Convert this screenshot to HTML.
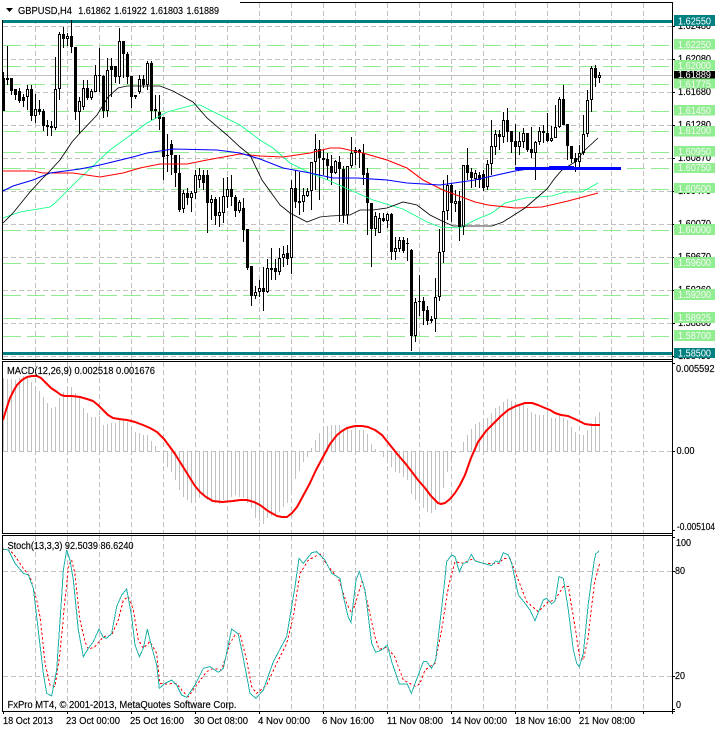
<!DOCTYPE html>
<html><head><meta charset="utf-8"><title>GBPUSD,H4</title>
<style>
html,body{margin:0;padding:0;background:#fff;width:715px;height:729px;overflow:hidden}
svg{display:block;position:absolute;left:0;top:0}
text{font-family:"Liberation Sans",sans-serif;font-size:9.8px;fill:#000;stroke:#000;stroke-width:.15}
.w{fill:#f8f8f8;stroke:none}
.t{fill:#fff;stroke:none}
</style></head><body>
<svg width="715" height="729" viewBox="0 0 715 729" xmlns="http://www.w3.org/2000/svg">
<rect width="715" height="729" fill="#fff"/>
<!-- vertical grid -->
<g stroke="#c0c0c0" stroke-dasharray="5 3" shape-rendering="crispEdges" fill="none">
<path d="M35.5 3V359M67.5 3V359M99.5 3V359M131.5 3V359M163.5 3V359M195.5 3V359M227.5 3V359M259.5 3V359M291.5 3V359M323.5 3V359M355.5 3V359M387.5 3V359M419.5 3V359M451.5 3V359M483.5 3V359M515.5 3V359M547.5 3V359M579.5 3V359M611.5 3V359M643.5 3V359"/>
<path d="M35.5 362V533M67.5 362V533M99.5 362V533M131.5 362V533M163.5 362V533M195.5 362V533M227.5 362V533M259.5 362V533M291.5 362V533M323.5 362V533M355.5 362V533M387.5 362V533M419.5 362V533M451.5 362V533M483.5 362V533M515.5 362V533M547.5 362V533M579.5 362V533M611.5 362V533M643.5 362V533"/>
<path d="M35.5 536V711M67.5 536V711M99.5 536V711M131.5 536V711M163.5 536V711M195.5 536V711M227.5 536V711M259.5 536V711M291.5 536V711M323.5 536V711M355.5 536V711M387.5 536V711M419.5 536V711M451.5 536V711M483.5 536V711M515.5 536V711M547.5 536V711M579.5 536V711M611.5 536V711M643.5 536V711"/>
<path d="M3 26.5H672M3 59.5H672M3 92.5H672M3 125.5H672M3 158.5H672M3 191.5H672M3 224.5H672M3 257.5H672M3 290.5H672M3 323.5H672M3 356.5H672"/>
<path d="M3 451.5H672M3 571.5H672M3 676.5H672"/>
</g>
<!-- title background -->
<rect x="0" y="0" width="240" height="20" fill="#fff"/>
<!-- green levels -->
<path d="M3 45.5H672M3 66.5H672M3 84.5H672M3 111.5H672M3 131.5H672M3 152.5H672M3 168.5H672M3 189.5H672M3 230.5H672M3 263.5H672M3 295.5H672M3 318.5H672M3 336.5H672" stroke="#90ee90" stroke-dasharray="18 6" fill="none" shape-rendering="crispEdges"/>
<path d="M3 75.5H672" stroke="#c0c0c0" fill="none" shape-rendering="crispEdges"/>
<rect x="3" y="20" width="669" height="3" fill="#008080"/>
<rect x="3" y="352" width="669" height="3" fill="#008080"/>
<!-- wicks -->
<path shape-rendering="crispEdges" fill="none" stroke="#000" d="M3.5 72V111M7.5 46V85M11.5 78V95M15.5 89V100M19.5 88V103M23.5 94V107M27.5 85V110M31.5 85V121M35.5 94V123M39.5 100V115M43.5 109V131M47.5 120V136M51.5 121V136M55.5 57V130M59.5 32V100M63.5 27V48M67.5 33V46M71.5 20V53M75.5 47V120M79.5 97V134M83.5 80V110M87.5 80V100M91.5 89V100M95.5 65V92M99.5 48V92M103.5 75V118M107.5 58V117M111.5 58V97M115.5 66V83M119.5 28V84M123.5 41V78M127.5 52V84M131.5 76V108M135.5 95V99M139.5 75V94M143.5 75V88M147.5 61V90M151.5 61V120M155.5 95V119M159.5 95V130M163.5 117V180M167.5 134V172M171.5 140V175M175.5 155V187M179.5 155V212M183.5 190V213M187.5 188V205M191.5 191V212M195.5 170V199M199.5 168V188M203.5 170V190M207.5 170V233M211.5 195V220M215.5 197V225M219.5 197V227M223.5 178V223M227.5 177V208M231.5 175V206M235.5 195V217M239.5 200V213M243.5 198V242M247.5 229V270M251.5 266V306M255.5 286V299M259.5 280V297M263.5 267V311M267.5 259V293M271.5 248V280M275.5 259V280M279.5 248V275M283.5 246V267M287.5 245V265M291.5 180V274M295.5 170V208M299.5 172V215M303.5 188V212M307.5 188V197M311.5 162V210M315.5 134V190M319.5 140V200M323.5 149V175M327.5 153V180M331.5 155V185M335.5 160V174M339.5 156V222M343.5 166V223M347.5 166V224M351.5 137V168M355.5 147V165M359.5 149V168M363.5 144V185M367.5 168V235M371.5 203V267M375.5 212V236M379.5 213V233M383.5 213V222M387.5 213V228M391.5 213V260M395.5 237V260M399.5 237V252M403.5 237V253M407.5 238V261M411.5 249V351M415.5 298V342M419.5 275V316M423.5 297V325M427.5 306V325M431.5 316V323M435.5 278V332M439.5 229V301M443.5 180V263M447.5 175V220M451.5 183V222M455.5 190V212M459.5 191V241M463.5 165V235M467.5 148V180M471.5 168V188M475.5 170V187M479.5 172V188M483.5 170V191M487.5 160V190M491.5 120V175M495.5 130V155M499.5 130V150M503.5 112V143M507.5 108V142M511.5 131V153M515.5 124V165M519.5 132V155M523.5 128V148M527.5 133V152M531.5 127V158M535.5 141V180M539.5 127V145M543.5 125V143M547.5 113V142M551.5 126V142M555.5 105V138M559.5 97V128M563.5 85V125M567.5 124V160M571.5 146V163M575.5 153V172M579.5 145V170M583.5 115V155M587.5 90V137M591.5 66V112M595.5 65V87M599.5 72V83"/>
<!-- white bodies -->
<path shape-rendering="crispEdges" fill="#fff" stroke="#000" d="M3.5 78.5h1v32h-1zM26.5 89.5h2v7h-2zM34.5 109.5h2v6h-2zM54.5 89.5h2v38h-2zM58.5 34.5h2v54h-2zM66.5 36.5h2v2h-2zM78.5 101.5h2v10h-2zM82.5 88.5h2v18h-2zM90.5 91.5h2v6h-2zM94.5 75.5h2v16h-2zM106.5 70.5h2v40h-2zM118.5 41.5h2v35h-2zM138.5 79.5h2v12h-2zM146.5 63.5h2v21h-2zM182.5 193.5h2v15h-2zM190.5 193.5h2v4h-2zM194.5 175.5h2v17h-2zM198.5 175.5h2v4h-2zM210.5 199.5h2v3h-2zM218.5 212.5h2v3h-2zM222.5 196.5h2v16h-2zM226.5 189.5h2v7h-2zM238.5 202.5h2v8h-2zM254.5 292.5h2v3h-2zM258.5 288.5h2v3h-2zM266.5 268.5h2v23h-2zM278.5 258.5h2v13h-2zM282.5 254.5h2v3h-2zM290.5 188.5h2v69h-2zM302.5 195.5h2v6h-2zM306.5 191.5h2v4h-2zM310.5 162.5h2v28h-2zM314.5 149.5h2v12h-2zM334.5 161.5h2v11h-2zM346.5 166.5h2v48h-2zM350.5 153.5h2v12h-2zM354.5 150.5h2v2h-2zM374.5 216.5h2v12h-2zM378.5 218.5h2v14h-2zM386.5 214.5h2v6h-2zM394.5 248.5h2v3h-2zM398.5 240.5h2v8h-2zM414.5 302.5h2v33h-2zM434.5 297.5h2v21h-2zM438.5 252.5h2v44h-2zM442.5 211.5h2v40h-2zM446.5 185.5h2v25h-2zM454.5 201.5h2v2h-2zM462.5 165.5h2v61h-2zM474.5 173.5h2v5h-2zM486.5 164.5h2v22h-2zM490.5 146.5h2v17h-2zM494.5 134.5h2v12h-2zM502.5 120.5h2v16h-2zM518.5 141.5h2v5h-2zM522.5 133.5h2v8h-2zM534.5 142.5h2v10h-2zM538.5 131.5h2v10h-2zM550.5 138.5h2v2h-2zM554.5 127.5h2v10h-2zM558.5 99.5h2v27h-2zM578.5 153.5h2v8h-2zM582.5 134.5h2v18h-2zM586.5 100.5h2v33h-2zM590.5 68.5h2v31h-2zM598.5 75.5h2v2h-2z"/>
<!-- black bodies -->
<path shape-rendering="crispEdges" fill="#000" d="M6 78h3v2h-3zM10 78h3v13h-3zM14 89h3v6h-3zM18 91h3v10h-3zM22 97h3v4h-3zM30 89h3v27h-3zM38 109h3v3h-3zM42 111h3v15h-3zM46 125h3v2h-3zM50 126h3v2h-3zM62 34h3v5h-3zM70 36h3v11h-3zM74 47h3v65h-3zM86 88h3v10h-3zM98 75h3v1h-3zM102 76h3v35h-3zM110 66h3v4h-3zM114 66h3v11h-3zM122 41h3v13h-3zM126 54h3v23h-3zM130 76h3v21h-3zM134 95h3v2h-3zM142 79h3v6h-3zM150 63h3v48h-3zM154 109h3v2h-3zM158 112h3v7h-3zM162 117h3v40h-3zM166 155h3v1h-3zM170 144h3v11h-3zM174 155h3v18h-3zM178 173h3v37h-3zM186 193h3v5h-3zM202 175h3v8h-3zM206 175h3v28h-3zM214 199h3v17h-3zM230 189h3v8h-3zM234 197h3v14h-3zM242 208h3v22h-3zM246 229h3v39h-3zM250 266h3v30h-3zM262 288h3v4h-3zM270 268h3v2h-3zM274 268h3v4h-3zM286 253h3v6h-3zM294 188h3v14h-3zM298 201h3v2h-3zM318 149h3v9h-3zM322 158h3v2h-3zM326 159h3v7h-3zM330 166h3v7h-3zM338 162h3v7h-3zM342 169h3v46h-3zM358 150h3v3h-3zM362 153h3v22h-3zM366 173h3v30h-3zM370 203h3v26h-3zM382 218h3v3h-3zM390 214h3v38h-3zM402 240h3v11h-3zM406 243h3v1h-3zM410 250h3v86h-3zM418 301h3v1h-3zM422 301h3v10h-3zM426 310h3v11h-3zM430 319h3v2h-3zM450 185h3v18h-3zM458 201h3v26h-3zM466 165h3v8h-3zM470 172h3v6h-3zM478 175h3v5h-3zM482 174h3v14h-3zM498 134h3v3h-3zM506 120h3v12h-3zM510 131h3v11h-3zM514 141h3v6h-3zM526 133h3v17h-3zM530 149h3v4h-3zM542 131h3v2h-3zM546 133h3v8h-3zM562 99h3v26h-3zM566 124h3v22h-3zM570 146h3v13h-3zM574 158h3v4h-3zM594 68h3v10h-3z"/>
<!-- moving averages -->
<g fill="none" stroke-width=".85">
<polyline stroke="#00ff7f" points="3,218 20,212 50,207 55,203 78,180 110,150 147,123 167,112 193,105 200,105 240,125 260,140 273,148 290,163 310,173 328,180 350,190 373,200 403,209 427,222 440,227 460,228 475,220 492,213 505,203 525,198 552,196 565,192 582,192 598,183"/>
<polyline stroke="#ff0000" stroke-width="1.1" points="3,171 33,171 43,173 73,173 100,177 123,173 140,168 160,164 187,164 207,160 240,154 260,156 283,157 310,153 330,148 340,148 363,153 387,160 407,168 423,180 443,190 475,202 488,205 515,208 542,207 568,201 598,193"/>
<polyline stroke="#0000ff" stroke-width="1.1" points="3,191 13,186 33,180 50,173 80,169 100,165 133,157 147,153 173,149 217,150 240,153 260,159 283,168 310,173 333,178 357,178 387,180 407,183 440,185 475,180 488,177 515,171 535,168"/>
<polyline stroke="#000" points="3,223 13,213 30,192 41,180 48,173 60,160 72,142 80,133 97,115 102,107 108,97 118,88 127,86 160,86 173,91 193,102 207,118 227,135 240,147 250,155 262,180 280,205 290,213 307,222 320,217 330,216 350,215 360,210 373,210 387,208 403,202 417,205 430,215 440,220 453,226 492,226 503,222 525,208 547,189 555,178 562,170 575,162 585,150 598,138"/>
</g>
<rect x="515" y="167" width="106" height="3" fill="#0000ff"/>
<rect x="549" y="166" width="25" height="1" fill="#0000ff"/>
<!-- MACD histogram -->
<path shape-rendering="crispEdges" fill="none" stroke="#c0c0c0" d="M3.5 451V378M7.5 451V379M11.5 451V379M15.5 451V380M19.5 451V378M23.5 451V376M27.5 451V377M31.5 451V382M35.5 451V386M39.5 451V391M43.5 451V397M47.5 451V403M51.5 451V408M55.5 451V407M59.5 451V398M63.5 451V392M67.5 451V387M71.5 451V387M75.5 451V393M79.5 451V398M83.5 451V408M87.5 451V413M91.5 451V417M95.5 451V417M99.5 451V416M103.5 451V425M107.5 451V424M111.5 451V423M115.5 451V423M119.5 451V420M123.5 451V420M127.5 451V422M131.5 451V428M135.5 451V432M139.5 451V433M143.5 451V435M147.5 451V435M151.5 451V441M155.5 451V446M163.5 451V458M167.5 451V467M171.5 451V472M175.5 451V480M179.5 451V490M183.5 451V497M187.5 451V500M191.5 451V503M195.5 451V502M199.5 451V498M203.5 451V495M207.5 451V500M211.5 451V502M215.5 451V503M219.5 451V504M223.5 451V500M227.5 451V498M231.5 451V497M235.5 451V495M239.5 451V497M243.5 451V498M247.5 451V503M251.5 451V508M255.5 451V518M259.5 451V521M263.5 451V524M267.5 451V518M271.5 451V516M275.5 451V515M279.5 451V512M283.5 451V507M287.5 451V503M291.5 451V491M295.5 451V479M299.5 451V471M303.5 451V462M307.5 451V457M311.5 451V448M315.5 451V440M319.5 451V433M323.5 451V430M327.5 451V426M331.5 451V425M335.5 451V425M339.5 451V425M343.5 451V430M347.5 451V428M351.5 451V430M355.5 451V430M359.5 451V430M363.5 451V430M367.5 451V434M371.5 451V444M375.5 451V449M383.5 451V457M387.5 451V460M391.5 451V467M395.5 451V472M399.5 451V473M403.5 451V477M407.5 451V480M411.5 451V494M415.5 451V500M419.5 451V503M423.5 451V508M427.5 451V512M431.5 451V513M435.5 451V510M439.5 451V502M443.5 451V488M447.5 451V472M451.5 451V462M455.5 451V453M463.5 451V442M467.5 451V435M471.5 451V429M475.5 451V424M479.5 451V422M483.5 451V420M487.5 451V418M491.5 451V413M495.5 451V408M499.5 451V406M503.5 451V402M507.5 451V399M511.5 451V401M515.5 451V403M519.5 451V405M523.5 451V405M527.5 451V408M531.5 451V412M535.5 451V414M539.5 451V415M543.5 451V415M547.5 451V415M551.5 451V418M555.5 451V418M559.5 451V416M563.5 451V418M567.5 451V420M571.5 451V427M575.5 451V432M579.5 451V435M583.5 451V435M587.5 451V430M591.5 451V423M595.5 451V417M599.5 451V412"/>
<polyline fill="none" stroke="#ff0000" stroke-width="2" stroke-linejoin="round" points="3,420 6,410 10,398 14,390 17,385 22,380 27,377 32,376 37,376 41,378 45,382 51,388 57,392 61,395 65,396 72,396 80,397 87,399 93,401 98,405 103,410 108,415 113,418 119,419 127,420 135,422 143,425 150,428 157,432 164,439 170,447 175,454 180,462 185,470 190,478 195,486 200,492 206,497 213,501 222,502 233,501 240,500 247,500 254,502 260,505 268,511 277,516 282,517 287,517 292,513 297,507 303,496 310,483 316,470 323,457 330,444 337,435 342,431 347,428 351,427 355,426 362,426 368,427 375,430 382,435 390,445 398,455 405,463 412,472 418,480 425,488 431,496 438,503 441,504 445,503 450,499 455,493 460,485 465,475 471,458 478,442 486,431 495,422 501,416 508,410 516,406 525,403 532,403 538,405 545,408 550,410 555,413 561,415 568,416 577,420 585,424 592,425 600,425"/>
<!-- Stochastic -->
<g fill="none" stroke="#ff0000" stroke-dasharray="7 7" stroke-width="3" shape-rendering="crispEdges">
<polyline transform="translate(0,530) scale(.33333)" points="8,58 30,60 50,85 70,115 90,140 110,210 120,260 135,400 150,465 165,470 180,370 195,210 205,110 215,90 225,130 240,270 255,335 265,358 285,350 310,320 335,315 355,270 370,210 385,200 400,240 415,330 430,355 450,335 470,370 480,460 500,462 530,460 545,480 565,500 590,465 620,425 640,415 665,420 690,340 705,315 720,310 740,390 755,470 770,490 800,465 830,400 860,340 880,260 900,130 925,90 960,72 985,110 1015,145 1040,220 1055,250 1065,225"/>
<polyline transform="translate(355,530) scale(.33333)" points="0,225 22,150 40,230 60,320 72,358 95,352 118,378 145,450 182,470 195,460 210,420 240,400 260,300 280,170 300,95 325,100 349,88 385,100 410,100 433,100 445,85 465,85 490,150 515,215 550,245 580,215 600,210 625,170 640,170 660,290 673,375 685,390 700,320 718,160 735,97"/>
</g>
<g fill="none" stroke="#20b2aa" stroke-width="3" shape-rendering="crispEdges">
<polyline transform="translate(0,530) scale(.33333)" points="8,57 25,60 45,100 70,130 85,135 100,175 110,260 130,430 140,490 155,498 170,420 185,200 190,120 200,60 210,90 220,150 235,300 250,380 265,355 280,335 297,297 310,322 320,325 335,310 350,230 365,195 380,177 395,260 405,345 418,380 430,355 442,297 455,350 470,405 478,475 495,460 515,450 530,465 545,495 560,502 585,465 610,415 630,410 655,427 670,415 695,297 715,312 730,385 750,490 768,505 790,480 820,395 860,320 885,170 897,85 910,100 935,68 950,65 975,90 995,130 1020,145 1030,200 1045,262 1053,277 1068,150"/>
<polyline transform="translate(355,530) scale(.33333)" points="3,150 13,125 30,180 50,340 62,367 80,360 97,345 110,395 133,462 157,462 169,490 205,395 215,395 230,415 242,390 265,190 275,95 290,75 300,80 313,125 325,100 337,97 349,73 360,93 385,100 410,107 422,93 433,97 445,68 460,75 470,100 490,195 510,220 525,240 540,272 565,210 575,205 590,222 600,213 612,140 625,145 640,240 655,360 665,400 673,410 685,370 700,220 718,90 722,72 732,63"/>
</g>
<!-- frame -->
<g fill="none" stroke="#000" shape-rendering="crispEdges">
<path d="M240 2.5H672.5V714M2.5 20V359.5H672M2.5 361.5H672M2.5 361V533.5H672M2.5 535.5H672M2.5 535V711.5H675"/>
<path d="M672 26.5h3M672 59.5h3M672 92.5h3M672 125.5h3M672 158.5h3M672 191.5h3M672 224.5h3M672 257.5h3M672 290.5h3M672 323.5h3M672 356.5h3M672 363.5h3M672 451.5h3M672 530.5h3M672 537.5h3M672 571.5h3M672 676.5h3M672 709.5h3"/>
<path d="M3.5 711V714M67.5 711V714M131.5 711V714M195.5 711V714M259.5 711V714M323.5 711V714M387.5 711V714M451.5 711V714M515.5 711V714M579.5 711V714M643.5 711V714"/>
</g>
<!-- title -->
<path d="M6 8h7l-3.5 4z" fill="#000"/>
<text x="18" y="14" textLength="54" lengthAdjust="spacingAndGlyphs">GBPUSD,H4</text>
<text x="78.3" y="14" textLength="32.5" lengthAdjust="spacingAndGlyphs">1.61862</text>
<text x="114.3" y="14" textLength="32.5" lengthAdjust="spacingAndGlyphs">1.61922</text>
<text x="150.5" y="14" textLength="32.5" lengthAdjust="spacingAndGlyphs">1.61803</text>
<text x="186.5" y="14" textLength="32.5" lengthAdjust="spacingAndGlyphs">1.61889</text>
<text x="7" y="374" textLength="148" lengthAdjust="spacingAndGlyphs">MACD(12,26,9) 0.002518 0.001676</text>
<text x="7.5" y="549" textLength="126" lengthAdjust="spacingAndGlyphs">Stoch(13,3,3) 92.5039 86.6240</text>
<text x="7.5" y="708" textLength="229" lengthAdjust="spacingAndGlyphs">FxPro MT4, © 2001-2013, MetaQuotes Software Corp.</text>
<!-- price ticks -->
<g>
<text x="678" y="29" textLength="33" lengthAdjust="spacingAndGlyphs">1.62480</text>
<text x="678" y="62" textLength="33" lengthAdjust="spacingAndGlyphs">1.62080</text>
<text x="678" y="95" textLength="33" lengthAdjust="spacingAndGlyphs">1.61680</text>
<text x="678" y="128" textLength="33" lengthAdjust="spacingAndGlyphs">1.61280</text>
<text x="678" y="161" textLength="33" lengthAdjust="spacingAndGlyphs">1.60870</text>
<text x="678" y="194" textLength="33" lengthAdjust="spacingAndGlyphs">1.60470</text>
<text x="678" y="227" textLength="33" lengthAdjust="spacingAndGlyphs">1.60070</text>
<text x="678" y="260" textLength="33" lengthAdjust="spacingAndGlyphs">1.59670</text>
<text x="678" y="293" textLength="33" lengthAdjust="spacingAndGlyphs">1.59260</text>
<text x="678" y="326" textLength="33" lengthAdjust="spacingAndGlyphs">1.58860</text>
<text x="678" y="359" textLength="33" lengthAdjust="spacingAndGlyphs">1.58450</text>
</g>
<!-- price labels -->
<g fill="#90ee90">
<rect x="674" y="39" width="41" height="10.5"/><rect x="674" y="60" width="41" height="10.5"/><rect x="674" y="78" width="41" height="10.5"/><rect x="674" y="105" width="41" height="10.5"/><rect x="674" y="126" width="41" height="10.5"/><rect x="674" y="146" width="41" height="10.5"/><rect x="674" y="163" width="41" height="10"/><rect x="674" y="183" width="41" height="10"/><rect x="674" y="224" width="41" height="11"/><rect x="674" y="257" width="41" height="11"/><rect x="674" y="289" width="41" height="11"/><rect x="674" y="312" width="41" height="11"/><rect x="674" y="330" width="41" height="11"/>
</g>
<rect x="674" y="15" width="41" height="11" fill="#008080"/>
<rect x="674" y="348" width="41" height="10" fill="#008080"/>
<rect x="674" y="71" width="41" height="7.5" fill="#000"/>
<text class="t" x="678" y="24.5" textLength="33" lengthAdjust="spacingAndGlyphs">1.62550</text>
<text class="w" x="678" y="48" textLength="33" lengthAdjust="spacingAndGlyphs">1.62250</text>
<text class="w" x="678" y="69" textLength="33" lengthAdjust="spacingAndGlyphs">1.62000</text>
<text class="t" x="678" y="78" textLength="33" lengthAdjust="spacingAndGlyphs">1.61889</text>
<text class="w" x="678" y="87.5" textLength="33" lengthAdjust="spacingAndGlyphs">1.61775</text>
<text class="w" x="678" y="114" textLength="33" lengthAdjust="spacingAndGlyphs">1.61450</text>
<text class="w" x="678" y="134" textLength="33" lengthAdjust="spacingAndGlyphs">1.61200</text>
<text class="w" x="678" y="155" textLength="33" lengthAdjust="spacingAndGlyphs">1.60950</text>
<text class="w" x="678" y="171" textLength="33" lengthAdjust="spacingAndGlyphs">1.60750</text>
<text class="w" x="678" y="192" textLength="33" lengthAdjust="spacingAndGlyphs">1.60500</text>
<text class="w" x="678" y="233" textLength="33" lengthAdjust="spacingAndGlyphs">1.60000</text>
<text class="w" x="678" y="266" textLength="33" lengthAdjust="spacingAndGlyphs">1.59600</text>
<text class="w" x="678" y="298" textLength="33" lengthAdjust="spacingAndGlyphs">1.59200</text>
<text class="w" x="678" y="321" textLength="33" lengthAdjust="spacingAndGlyphs">1.58925</text>
<text class="w" x="678" y="339" textLength="33" lengthAdjust="spacingAndGlyphs">1.58700</text>
<text class="t" x="678" y="356.5" textLength="33" lengthAdjust="spacingAndGlyphs">1.58500</text>
<!-- indicator scales -->
<text x="676" y="372" textLength="38.5" lengthAdjust="spacingAndGlyphs">0.005592</text>
<text x="676.5" y="454" textLength="18" lengthAdjust="spacingAndGlyphs">0.00</text>
<text x="677" y="530" textLength="38" lengthAdjust="spacingAndGlyphs">-0.005104</text>
<text x="676" y="546" textLength="15" lengthAdjust="spacingAndGlyphs">100</text>
<text x="675" y="574" textLength="10" lengthAdjust="spacingAndGlyphs">80</text>
<text x="675" y="679" textLength="10" lengthAdjust="spacingAndGlyphs">20</text>
<text x="676" y="708" textLength="5" lengthAdjust="spacingAndGlyphs">0</text>
<!-- dates -->
<text x="3" y="724" textLength="50" lengthAdjust="spacingAndGlyphs">18 Oct 2013</text>
<text x="66" y="724" textLength="54" lengthAdjust="spacingAndGlyphs">23 Oct 00:00</text>
<text x="130" y="724" textLength="54" lengthAdjust="spacingAndGlyphs">25 Oct 16:00</text>
<text x="194" y="724" textLength="54" lengthAdjust="spacingAndGlyphs">30 Oct 08:00</text>
<text x="258" y="724" textLength="52" lengthAdjust="spacingAndGlyphs">4 Nov 00:00</text>
<text x="322" y="724" textLength="52" lengthAdjust="spacingAndGlyphs">6 Nov 16:00</text>
<text x="387" y="724" textLength="56" lengthAdjust="spacingAndGlyphs">11 Nov 08:00</text>
<text x="451" y="724" textLength="56" lengthAdjust="spacingAndGlyphs">14 Nov 00:00</text>
<text x="515" y="724" textLength="56" lengthAdjust="spacingAndGlyphs">18 Nov 16:00</text>
<text x="579" y="724" textLength="56" lengthAdjust="spacingAndGlyphs">21 Nov 08:00</text>
</svg>
</body></html>
